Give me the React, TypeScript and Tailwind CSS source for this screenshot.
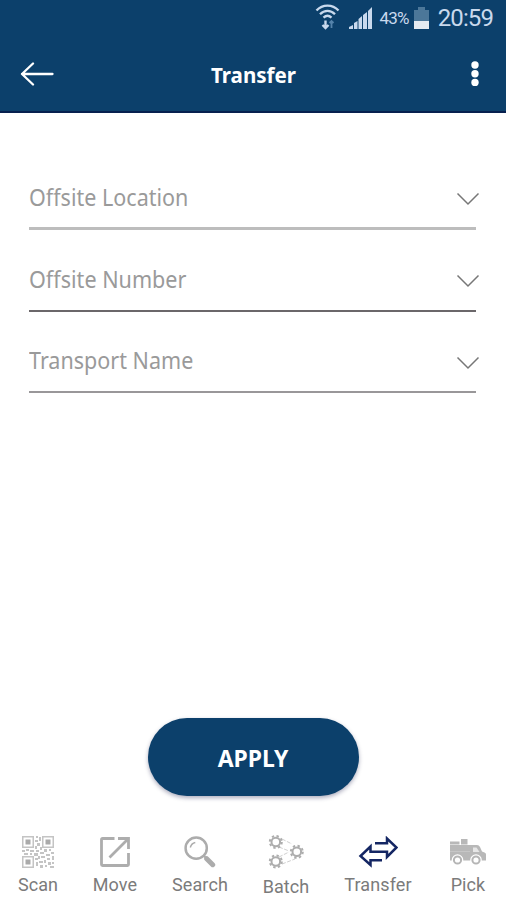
import type { ReactNode } from "react";

type Field = {
  label: string;
  labelClass: string;
  lineClass: string;
};

type NavItem = {
  label: string;
  itemClass: string;
  labelClass: string;
  icon: ReactNode;
};

const fields: Field[] = [
  { label: "Offsite Location", labelClass: "scale-x-[0.936]", lineClass: "h-[3px] bg-[#bdbdbd]" },
  { label: "Offsite Number", labelClass: "scale-x-[0.938]", lineClass: "mt-px h-[2px] bg-[#6b676a]" },
  { label: "Transport Name", labelClass: "-mt-px scale-x-[0.936]", lineClass: "h-[2px] bg-[#999799]" }
];

const navItems: NavItem[] = [
  { label: "Scan", itemClass: "w-[76px]", labelClass: "", icon: <QrIcon /> },
  { label: "Move", itemClass: "w-[78px]", labelClass: "", icon: <MoveIcon /> },
  { label: "Search", itemClass: "w-[92px]", labelClass: "", icon: <SearchIcon /> },
  { label: "Batch", itemClass: "w-[80px]", labelClass: "pt-[2px]", icon: <BatchIcon /> },
  { label: "Transfer", itemClass: "w-[104px]", labelClass: "", icon: <TransferIcon /> },
  { label: "Pick", itemClass: "w-[76px]", labelClass: "", icon: <TruckIcon /> }
];

export default function App() {
  return (
    <div className="flex h-[900px] w-[506px] flex-col overflow-hidden bg-white font-['Noto_Sans',sans-serif]">
      <header className="h-[113px] border-b-2 border-[#07204f] bg-[#0c406b] text-white">
        <StatusBar />
        <div className="grid h-[75px] grid-cols-[1fr_auto_1fr] items-center">
          <button type="button" aria-label="Back" className="pl-[20px]">
            <svg width="34" height="24" viewBox="0 0 34 24" fill="none" stroke="#fff" strokeWidth="2.3" strokeLinecap="round" strokeLinejoin="round">
              <path d="M32.500 12H2M13 1.500 2 12l11 10.500" />
            </svg>
          </button>
          <h1 className="origin-center scale-x-[0.935] text-[22px] font-bold leading-7">Transfer</h1>
          <button type="button" aria-label="Menu" className="justify-self-end pr-[25px]">
            <svg width="12" height="26" viewBox="0 0 12 26" fill="#fff">
              <circle cx="6" cy="4" r="3.7" />
              <circle cx="6" cy="12.700" r="3.7" />
              <circle cx="6" cy="21.400" r="3.7" />
            </svg>
          </button>
        </div>
      </header>

      <main className="flex grow flex-col items-center pt-[66px]">
        <div className="w-full pl-[29px] pr-[30px]">
          {fields.map((field) => (
            <FieldRow key={field.label} field={field} />
          ))}
        </div>
        <button
          type="button"
          className="mb-[28px] mt-auto h-[78px] w-[211px] rounded-full bg-[#0c406b] text-[24px] font-bold text-white shadow-[0_2px_4px_rgba(20,20,70,0.35)]"
        >
          <span className="inline-block scale-x-[0.955] pt-[1px]">APPLY</span>
        </button>
      </main>

      <nav className="flex h-[76px] font-[Roboto,sans-serif]">
        {navItems.map((item) => (
          <div key={item.label} className={`flex flex-col items-center ${item.itemClass}`}>
            <div className="flex h-[56px] items-center">{item.icon}</div>
            <span className={`-mt-[5px] text-[18px] leading-[20px] tracking-[0.1px] text-[#7b7b7b] ${item.labelClass}`}>
              {item.label}
            </span>
          </div>
        ))}
      </nav>
    </div>
  );
}

function StatusBar() {
  return (
    <div className="flex h-[36px] items-center justify-end pr-[13px] font-[Roboto,sans-serif] text-[#c9d9ed]">
      <svg width="25" height="28" viewBox="0 0 25 28" fill="none" stroke="currentColor" strokeWidth="2.300" className="-mt-[3px]">
        <path d="M1.500 7.500C7.500 1 17.500 1 23.500 7.500M5 11.200c4.500-4.500 10.500-4.500 15 0M8.500 14.700c2.500-2.400 5.500-2.400 8 0" />
        <path d="M10.500 17.500v7M7.500 22l3 3 3-3" strokeWidth="2.400" />
        <path d="M16.500 25v-7M14.500 20l2-2 2 2" stroke="#5583ab" strokeWidth="1.800" />
      </svg>
      <svg width="24" height="23" viewBox="0 0 24 23" fill="currentColor" className="ml-[9px]">
        <path d="M0 22v-2l4-2v4zM5 22v-6l3.500-2v8zM9.500 22V12l3.500-3v13zM14 22V8l4-3v17zM19 22V4l4-4v22z" />
      </svg>
      <span className="ml-[7px] text-[17px] leading-5 tracking-[-0.8px]">43%</span>
      <svg width="15" height="23" viewBox="0 0 15 23" className="ml-[5px]">
        <path d="M0 3h4V0h7v3h4v11H0z" fill="#4c7799" />
        <path d="M0 14h15v8H0z" fill="#e4eaf0" />
      </svg>
      <span className="ml-[9px] text-[24px] leading-7 tracking-[-0.9px]">20:59</span>
    </div>
  );
}

function FieldRow({ field }: { field: Field }) {
  return (
    <div className="flex h-[82px] flex-col">
      <div className="flex h-[48px] items-start justify-between">
        <span className={`origin-left whitespace-nowrap pt-[2px] text-[23px] leading-[32px] text-[#9a9a9a] ${field.labelClass}`}>
          {field.label}
        </span>
        <svg width="24" height="14" viewBox="0 0 24 14" fill="none" stroke="#777" strokeWidth="1.500" className="-mr-[4px] mt-[13px]">
          <path d="M1.500 1.500 12 12 22.500 1.500" />
        </svg>
      </div>
      <div className={field.lineClass} />
    </div>
  );
}

function QrIcon() {
  return (
    <svg width="32" height="32" viewBox="0 0 32 32" fill="#c4c4c4">
      <path fillRule="evenodd" d="M0 0h12v12H0zM1.500 1.500v9h9v-9zM20 0h12v12H20zM21.500 1.500v9h9v-9zM0 20h12v12H0zM1.500 21.500v9h9v-9z" />
      <path d="M3.500 3.500h5v5h-5zM23.500 3.500h5v5h-5zM3.500 23.500h5v5h-5z" fill="#aaa" />
      <path d="M14 0h2v2h-2zM17 1h2v4h-2zM13 4h3v2h-3zM15 7h3v3h-3zM13 10h2v3h-2zM18 11h2v3h-2zM0 14h3v2H0zM4 13h3v2H4zM8 14h4v2H8zM2 17h4v2H2zM8 17h2v2H8zM12 17h4v3h-4zM14 14h3v2h-3zM18 16h4v2h-4zM22 13h3v3h-3zM27 13h2v2h-2zM29 16h3v2h-3zM24 18h4v2h-4zM13 22h3v2h-3zM16 20h2v3h-2zM19 20h4v2h-4zM25 22h3v2h-3zM30 20h2v4h-2zM14 26h2v4h-2zM17 25h4v2h-4zM22 24h2v3h-2zM18 29h3v3h-3zM23 29h2v2h-2zM26 26h3v3h-3zM28 30h4v2h-4zM30 26h2v2h-2z" />
    </svg>
  );
}

function MoveIcon() {
  return (
    <svg width="32" height="32" viewBox="0 0 32 32" fill="none" stroke="#adadad" strokeWidth="2.800">
      <path d="M15.500 2.500H3.500Q2.500 2.500 2.500 3.500v25q0 1 1 1h25q1 0 1-1V17" />
      <path d="M10.500 21.500 28.500 3.500M19 2.500h10.500V13" />
    </svg>
  );
}

function SearchIcon() {
  return (
    <svg width="32" height="32" viewBox="0 0 32 32" fill="none" stroke="#acacac">
      <circle cx="12.200" cy="12.200" r="10.600" strokeWidth="2.500" />
      <path d="M6.300 11.500c.7-2.800 2.400-4.500 5-5" strokeWidth="1.500" />
      <path d="m20 20 2.500 2.500" strokeWidth="2" />
      <path d="m22.700 22.700 6 6" strokeWidth="5" strokeLinecap="round" />
    </svg>
  );
}

function Gear({ x, y }: { x: number; y: number }) {
  return (
    <g transform={`translate(${x} ${y})`} fill="none" stroke="#adadad">
      <circle r="4.300" strokeWidth="2" />
      <circle r="6" strokeWidth="2" strokeDasharray="2.350 2.362" />
    </g>
  );
}

function BatchIcon() {
  return (
    <svg width="36" height="34" viewBox="0 0 36 34">
      <path d="M14 4 24 9M11 12l10 4M11 22l10-5M14 29l13-5" fill="none" stroke="#d0d0d0" strokeWidth="1" strokeDasharray="4 1.500" />
      <Gear x={7.8} y={7} />
      <Gear x={28.8} y={16.800} />
      <Gear x={7.8} y={26.500} />
    </svg>
  );
}

function TransferIcon() {
  return (
    <svg width="40" height="32" viewBox="0 0 40 32" fill="none" stroke="#142663" strokeWidth="2.500">
      <path d="M17 7.300h12V2.500l9.500 9L29 21v-5.300H12.500V10.500L2.500 20l10 9v-4.700H24" />
    </svg>
  );
}

function TruckIcon() {
  return (
    <svg width="38" height="28" viewBox="0 0 38 28">
      <path d="M1 3.500h9.500V6.500H1zM12 1h6.500v5.500H12zM1 7h20v15.500H1zM21 7h7q2 0 3 2l2 4.500 2.500 1q1.500.6 1.500 2v6H21z" fill="#b8b8b8" />
      <path d="M24 9.500h3.500l3 4.500H24z" fill="#e6e6e6" />
      <path d="M1 13.500h20" stroke="#ccc" strokeWidth=".7" />
      <g fill="#fff">
        <circle cx="8.500" cy="22" r="5.800" />
        <circle cx="27" cy="22" r="5.800" />
      </g>
      <g fill="#fff" stroke="#b5b5b5" strokeWidth="2">
        <circle cx="8.500" cy="22" r="3.600" />
        <circle cx="27" cy="22" r="3.600" />
      </g>
    </svg>
  );
}
